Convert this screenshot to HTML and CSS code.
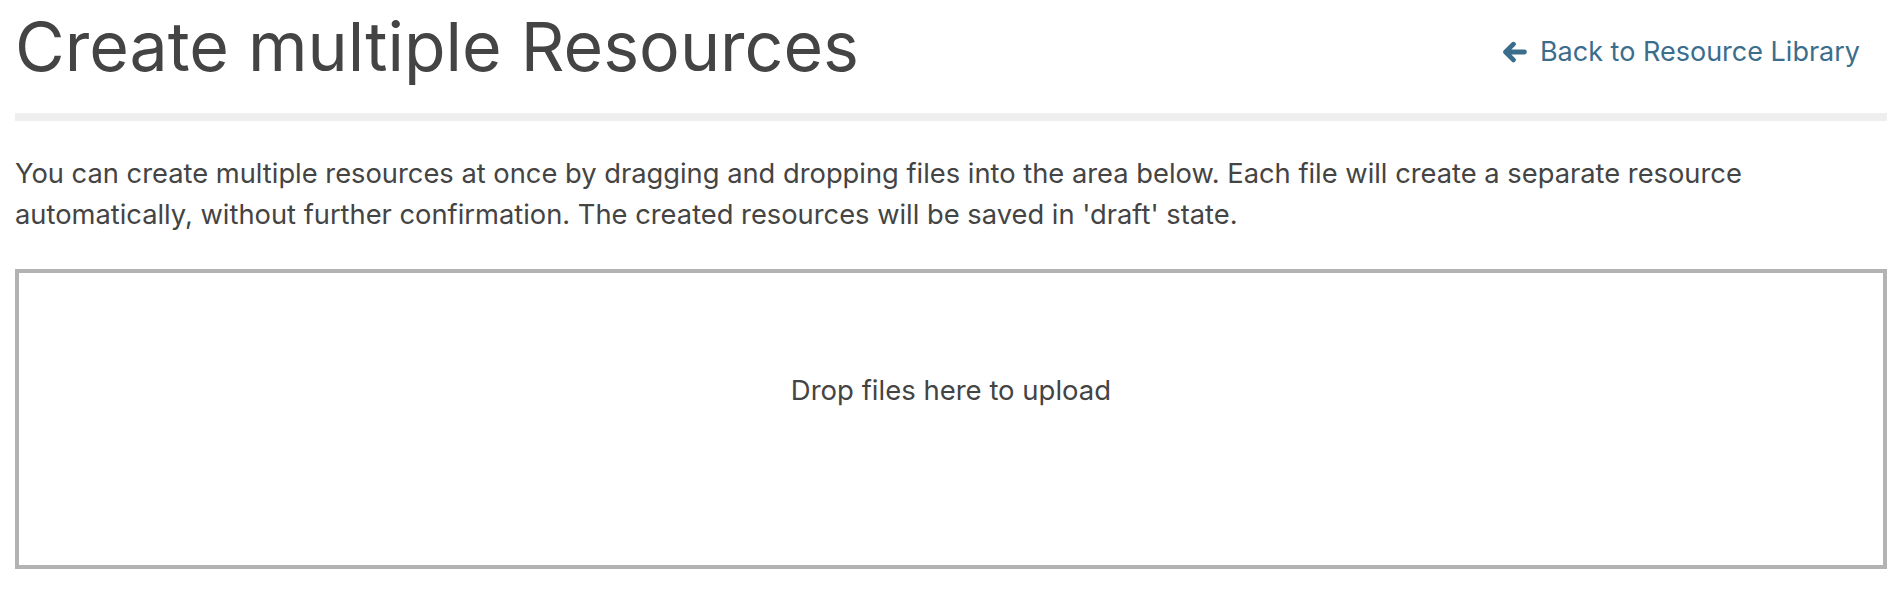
FILE: index.html
```html
<!DOCTYPE html>
<html lang="en">
<head>
<meta charset="utf-8">
<title>Create multiple Resources</title>
<link rel="stylesheet" href="styles.css">
</head>
<body>
<div class="page">
  <header class="page-header">
    <h1 class="page-title">Create multiple Resources</h1>
    <a class="back-link" href="#">
      <svg class="back-icon" viewBox="-20 0 488 512" aria-hidden="true"><path d="M9.4 233.4c-12.5 12.5-12.5 32.8 0 45.3l160 160c12.5 12.5 32.8 12.5 45.3 0s12.5-32.8 0-45.3L109.2 288 416 288c17.7 0 32-14.3 32-32s-14.3-32-32-32l-306.7 0L214.6 118.6c12.5-12.5 12.5-32.8 0-45.3s-32.8-12.5-45.3 0l-160 160z"/></svg>
      <span>Back to Resource Library</span>
    </a>
  </header>
  <p class="intro">You can create multiple resources at once by dragging and dropping files into the area below. Each file will create a separate resource automatically, without further confirmation. The created resources will be saved in 'draft' state.</p>
  <div class="dropzone">
    <span class="dropzone-message">Drop files here to upload</span>
  </div>
</div>
</body>
</html>
```
FILE: styles.css
```css
html, body {
  margin: 0;
  padding: 0;
  background: #ffffff;
}

body {
  font-family: Inter, "Noto Sans", sans-serif;
  color: #444444;
}

.page {
  padding: 0 11px 0 15px;
}

.page-header {
  display: flex;
  justify-content: space-between;
  align-items: flex-start;
  padding-top: 4px;
  padding-bottom: 25px;
  border-bottom: 8px solid #eeeeee;
}

.page-title {
  margin: 0;
  font-size: 68px;
  line-height: 84px;
  font-weight: 400;
  color: #444444;
}

.back-link {
  display: flex;
  align-items: center;
  gap: 13px;
  margin-top: 28px;
  margin-right: 27px;
  font-size: 27px;
  line-height: 40px;
  color: #3b6d8c;
  text-decoration: none;
}

.back-icon {
  width: 24px;
  height: 26px;
  fill: #3b6d8c;
  stroke: #3b6d8c;
  stroke-width: 34;
  stroke-linejoin: round;
}

.intro {
  margin: 32px 0 34px;
  font-size: 27.3px;
  line-height: 41px;
}

.dropzone {
  box-sizing: border-box;
  height: 300px;
  border: 4px solid #b3b3b3;
  padding-top: 97px;
  text-align: center;
}

.dropzone-message {
  font-size: 27.5px;
  line-height: 41px;
}
```
